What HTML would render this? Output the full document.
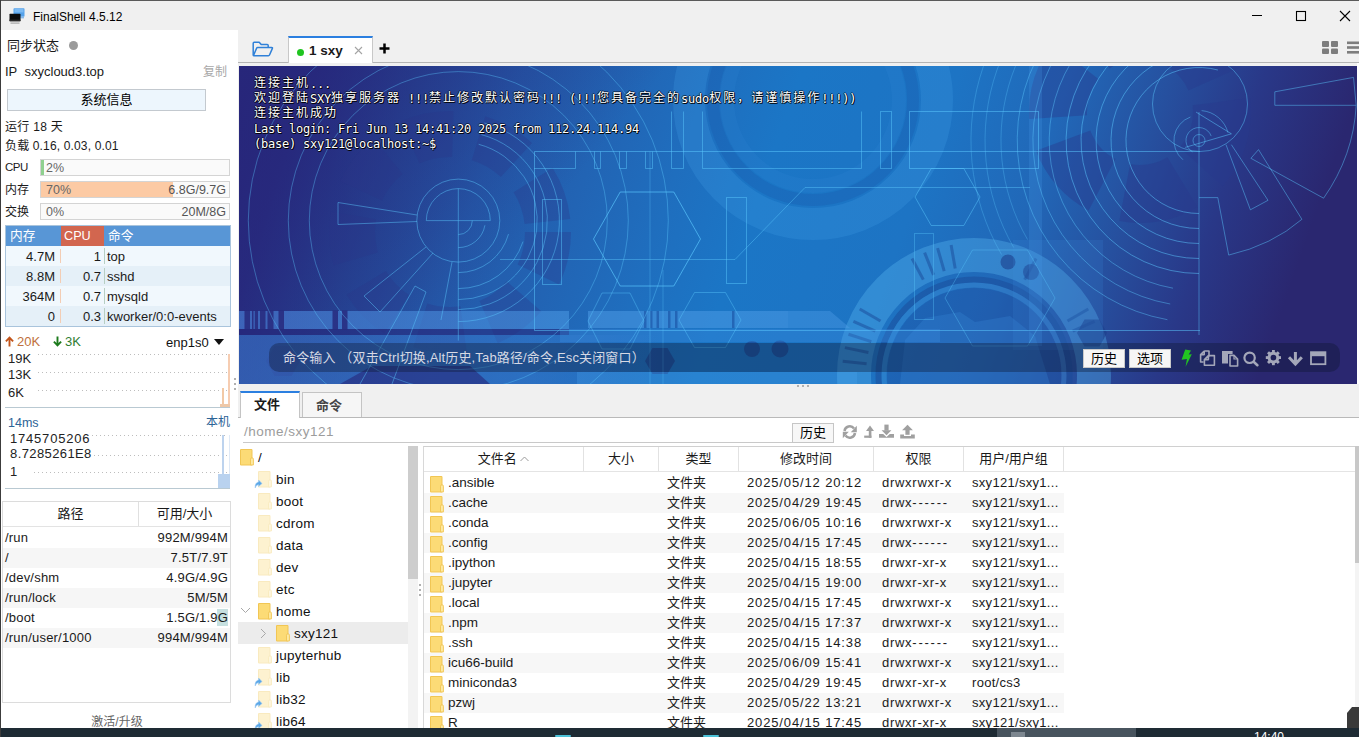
<!DOCTYPE html>
<html lang="zh-CN">
<head>
<meta charset="utf-8">
<title>FinalShell 4.5.12</title>
<style>
*{box-sizing:border-box;margin:0;padding:0}
html,body{width:1359px;height:737px;overflow:hidden;background:#f0f0f0}
body{position:relative;font-family:"Liberation Sans","Noto Sans CJK SC",sans-serif;font-size:13px;color:#1a1a1a;line-height:1}
.abs{position:absolute}
.t{position:absolute;white-space:nowrap;line-height:16px;height:16px}
/* ---------- title bar ---------- */
#titlebar{left:0;top:0;width:1359px;height:30px;background:#f0f0f0;border-top:1px solid #5a5a5a}
#wtitle{left:33px;top:9px;font-size:12px;color:#000}
/* ---------- left panel ---------- */
#left{left:1px;top:30px;width:237px;height:698px;background:#fff}
#winborder{left:0;top:0;width:1px;height:737px;background:#3c3c3c}
.bar{position:absolute;left:40px;width:190px;height:17px;border:1px solid #d4d4d4;background:#fafafa}
.bar i{position:absolute;left:0;top:0;bottom:0;display:block}
.bar .p{position:absolute;left:5px;top:0;line-height:17px;color:#666;font-size:12.5px}
.bar .v{position:absolute;right:3px;top:0;line-height:17px;color:#555;font-size:12.5px}
/* ---------- main ---------- */
#tabbar{left:238px;top:30px;width:1121px;height:33px;background:#f0f0f0;border-bottom:1px solid #b4b4b4}
#term{left:239px;top:66px;width:1118px;height:318px;overflow:hidden;background:#1d5fae}
#lower{left:238px;top:384px;width:1121px;height:344px;background:#f0f0f0}
#taskbar{left:0;top:728px;width:1359px;height:9px;background:#1e2b34;overflow:hidden}

#proc{left:5px;top:225px;width:226px;height:102px;border:1px solid #a9c4dc;background:#f1f8fd;font-size:13px}
#proc .ph{position:absolute;left:0;top:0;width:224px;height:20px;background:#5896d6;color:#fff;line-height:20px;font-size:12.7px}
#proc .ph span{top:0}
#proc .cpuh{left:55px;top:0;width:43px;height:20px;background:#d2664f;font-weight:normal}
#proc .pr{position:relative;height:20px;line-height:20px;width:224px}
#proc .pr:first-of-type{margin-top:0}
#proc .ph + .pr{margin-top:20px}
#proc .pr.a{background:#f1f8fd}
#proc .pr.b{background:#e5f0f8}
#proc .pr span{position:absolute;top:1px;white-space:nowrap}
#proc .pr .m{right:175px;text-align:right}
#proc .pr .c{right:129px;text-align:right}
#proc .pr .n{left:101px}
#proc .pr:before{content:"";position:absolute;left:54px;top:3px;width:1px;height:14px;background:#f3cdb4}
#proc .pr:after{content:"";position:absolute;left:98px;top:2px;width:1px;height:16px;background:#b7cfc4}

.dot{position:absolute;height:1px;background-image:linear-gradient(90deg,#bdbdbd 1px,transparent 1px);background-size:4px 1px}
#disk{left:2px;top:501px;width:229px;height:202px;border:1px solid #dcdcdc;background:#fff;font-size:13px}
#disk .dh{position:relative;height:25px;border-bottom:1px solid #e3e3e3;line-height:24px}
#disk .dh span{position:absolute;top:0;text-align:center}
#disk .dh i{position:absolute;left:135px;top:0;width:1px;height:24px;background:#e0e0e0}
#disk .dr{position:relative;height:20px;line-height:20px}
#disk .dh + .dr{margin-top:1px}
#disk .dr.g{background:#f6f6f6}
#disk .dr span{position:absolute;top:0;white-space:nowrap}
#disk .dr .l{left:2px}
#disk .dr .r{right:2px}
#disk .dr em{position:absolute;right:2px;top:1px;width:11px;height:17px;background:#c6e0e0}

#tt{position:absolute;left:15px;top:11px;color:#fff;font-family:"DejaVu Sans Mono","Liberation Mono","Noto Sans CJK SC",monospace;font-size:12px;letter-spacing:-0.224px;line-height:15px;white-space:pre;text-shadow:1px 1px 0 rgba(0,0,0,.85),-1px 0 0 rgba(0,0,0,.55),0 -1px 0 rgba(0,0,0,.55),1px 0 0 rgba(0,0,0,.55),0 1px 0 rgba(0,0,0,.55)}
#tt div{height:15px}
#tt .c{font-family:"Liberation Mono","Noto Sans CJK SC",monospace;font-size:12px;letter-spacing:2px;position:relative;top:-1px}
#cmd{position:absolute;left:30px;top:277px;width:1071px;height:29px;border-radius:10px;background:rgba(14,22,48,.36)}
#cmdt{position:absolute;left:44px;top:284px;line-height:16px;font-size:13px;letter-spacing:.15px;color:#d6d9e4;white-space:nowrap}
.tbtn{position:absolute;top:283px;height:19px;width:42px;background:#f6f6f6;border:1px solid #c9c9c9;color:#000;font-size:13px;line-height:17px;text-align:center}

/* ---------- lower panel ---------- */
#ltabline{left:238px;top:417px;width:1121px;height:1px;background:#b9b9b9}
#lwhite{left:238px;top:418px;width:1121px;height:310px;background:#fff}
.ltab{position:absolute;font-size:13px;font-weight:bold;text-align:center;line-height:24px}
#treesel{left:238px;top:622px;width:170px;height:22px;background:#ececec}
.tr{position:absolute;white-space:nowrap;font-size:13.5px;letter-spacing:.25px;padding-top:1px;line-height:22px;height:22px;color:#111}
.fi{position:absolute;width:14px;height:17px}
#flist{left:423px;top:446px;width:932px;height:282px;border-top:1px solid #d0d0d0;border-left:1px solid #d8d8d8;background:#fff;overflow:hidden}
#fhead{position:absolute;left:0;top:0;height:25px;width:931px;border-bottom:1px solid #e4e4e4;font-size:13px;line-height:24px}
#fhead span{position:absolute;top:0;text-align:center;height:24px;border-right:1px solid #e2e2e2}
.fr{position:absolute;left:0;width:640px;height:20px;line-height:20px;font-size:13px;white-space:nowrap}
.fr.g{background:#f7f7f7}
.fr span{position:absolute;top:0}
.fr .fi{top:3px;left:6px}

.fr .d{letter-spacing:.86px}
.fr .p{letter-spacing:.72px}
.fr .p i{font-style:normal;letter-spacing:1.75px}
.fr .u{letter-spacing:.3px}
.fr .n{font-size:13.5px}
#disk .dr span{letter-spacing:.2px}
</style>
</head>
<body>
<div id="titlebar" class="abs"></div>
<div id="wtitle" class="t">FinalShell 4.5.12</div>
<div id="left" class="abs"></div>

<!-- ===== left panel content ===== -->
<div class="t" style="left:7px;top:38px;font-size:13px">同步状态</div>
<div class="abs" style="left:69px;top:41px;width:9px;height:9px;border-radius:50%;background:#9b9b9b"></div>
<div class="t" style="left:5px;top:64px;font-size:13px">IP&nbsp;&nbsp;sxycloud3.top</div>
<div class="t" style="left:203px;top:64px;font-size:12px;color:#a8a8a8">复制</div>
<div class="abs" style="left:7px;top:89px;width:199px;height:22px;background:#edf6fd;border:1px solid #c3c9cf"></div>
<div class="t" style="left:7px;top:92px;width:199px;text-align:center;font-size:13px;color:#000">系统信息</div>
<div class="t" style="left:5px;top:119px;font-size:12px;letter-spacing:.3px">运行 18 天</div>
<div class="t" style="left:5px;top:138px;font-size:12px;letter-spacing:.15px">负载 0.16, 0.03, 0.01</div>
<div class="t" style="left:5px;top:159px;font-size:11.5px;letter-spacing:-0.5px">CPU</div>
<div class="bar" style="top:159px"><i style="width:3px;background:#8fd08f"></i><span class="p">2%</span></div>
<div class="t" style="left:5px;top:182px;font-size:12px">内存</div>
<div class="bar" style="top:181px"><i style="width:132px;background:#fccaa4"></i><span class="p">70%</span><span class="v">6.8G/9.7G</span></div>
<div class="t" style="left:5px;top:204px;font-size:12px">交换</div>
<div class="bar" style="top:203px"><span class="p">0%</span><span class="v">20M/8G</span></div>

<div id="proc" class="abs">
  <div class="ph"><span class="abs" style="left:4px">内存</span><b class="abs cpuh"><span style="margin-left:3px">CPU</span></b><span class="abs" style="left:102px">命令</span></div>
  <div class="pr a"><span class="m">4.7M</span><span class="c">1</span><span class="n">top</span></div>
  <div class="pr b"><span class="m">8.8M</span><span class="c">0.7</span><span class="n">sshd</span></div>
  <div class="pr a"><span class="m">364M</span><span class="c">0.7</span><span class="n">mysqld</span></div>
  <div class="pr b"><span class="m">0</span><span class="c">0.3</span><span class="n">kworker/0:0-events</span></div>
</div>

<!-- ===== network ===== -->
<svg class="abs" style="left:5px;top:336px" width="9" height="11" viewBox="0 0 9 11"><path d="M4.5 10.6 V2.2 M0.9 5.4 L4.5 1.6 L8.1 5.4" fill="none" stroke="#c2541a" stroke-width="1.9"/></svg>
<div class="t" style="left:17px;top:334px;font-size:13px;color:#c0703c">20K</div>
<svg class="abs" style="left:53px;top:336px" width="9" height="11" viewBox="0 0 9 11"><path d="M4.5 0.4 V8.8 M0.9 5.6 L4.5 9.4 L8.1 5.6" fill="none" stroke="#1c7a1c" stroke-width="1.9"/></svg>
<div class="t" style="left:65px;top:334px;font-size:13px;color:#2f7d32">3K</div>
<div class="t" style="left:166px;top:335px;font-size:13px;color:#111">enp1s0</div>
<div class="abs" style="left:214px;top:339px;width:0;height:0;border-left:5px solid transparent;border-right:5px solid transparent;border-top:6px solid #111"></div>
<div class="t" style="left:8px;top:351px;font-size:13px;color:#222">19K</div>
<div class="t" style="left:8px;top:367px;font-size:13px;color:#222">13K</div>
<div class="t" style="left:8px;top:385px;font-size:13px;color:#222">6K</div>
<div class="dot" style="left:38px;top:354px;width:190px"></div>
<div class="dot" style="left:38px;top:372px;width:190px"></div>
<div class="dot" style="left:38px;top:390px;width:190px"></div>
<div class="abs" style="left:5px;top:407px;width:225px;height:1px;background:#b9c9d2"></div>
<div class="abs" style="left:228px;top:354px;width:2px;height:53px;background:#f6cdb2"></div>
<div class="abs" style="left:222px;top:388px;width:2px;height:19px;background:#f2c9a6"></div>
<div class="abs" style="left:220px;top:404px;width:10px;height:3px;background:#eec8a8"></div>
<!-- ===== ping ===== -->
<div class="t" style="left:8px;top:415px;font-size:12.5px;color:#2d6396">14ms</div>
<div class="t" style="left:206px;top:414px;font-size:12px;color:#2d6396">本机</div>
<div class="t" style="left:10px;top:431px;font-size:13px;letter-spacing:0.8px;color:#222">1745705206</div>
<div class="t" style="left:10px;top:446px;font-size:13px;letter-spacing:0.4px;color:#222">8.7285261E8</div>
<div class="t" style="left:10px;top:464px;font-size:13px;color:#222">1</div>
<div class="dot" style="left:92px;top:435px;width:136px"></div>
<div class="dot" style="left:94px;top:455px;width:134px"></div>
<div class="dot" style="left:34px;top:472px;width:194px"></div>
<div class="abs" style="left:222px;top:435px;width:2px;height:40px;background:#bdd3ee"></div><div class="abs" style="left:229px;top:435px;width:1px;height:40px;background:#dfe9f6"></div>
<div class="abs" style="left:218px;top:474px;width:12px;height:14px;background:#b9d2ef"></div>
<div class="abs" style="left:5px;top:488px;width:225px;height:1px;background:#b9c9d2"></div>
<!-- ===== disk table ===== -->
<div id="disk" class="abs">
  <div class="dh"><span style="left:0;width:135px">路径</span><span style="left:136px;width:91px">可用/大小</span><i></i></div>
  <div class="dr"><span class="l">/run</span><span class="r">992M/994M</span></div>
  <div class="dr g"><span class="l">/</span><span class="r">7.5T/7.9T</span></div>
  <div class="dr"><span class="l">/dev/shm</span><span class="r">4.9G/4.9G</span></div>
  <div class="dr g"><span class="l">/run/lock</span><span class="r">5M/5M</span></div>
  <div class="dr"><em></em><span class="l">/boot</span><span class="r">1.5G/1.9G</span></div>
  <div class="dr g"><span class="l">/run/user/1000</span><span class="r">994M/994M</span></div>
</div>
<div class="t" style="left:57px;top:714px;width:120px;text-align:center;font-size:12px;color:#666">激活/升级</div>
<div id="tabbar" class="abs"></div>

<!-- ===== title bar icons ===== -->
<svg class="abs" style="left:8px;top:7px" width="18" height="18" viewBox="0 0 18 18">
  <rect x="5.5" y="1.2" width="11" height="8.6" rx="0.8" fill="#55a2ea"/>
  <rect x="6.5" y="2" width="9" height="3.4" fill="#8cc4f6" opacity="0.7"/>
  <rect x="12" y="9.8" width="4" height="1.6" fill="#8ab8e6"/>
  <rect x="1.5" y="6.8" width="11" height="7.4" rx="0.6" fill="#0c0c0c"/>
  <rect x="1.5" y="12.6" width="11" height="1.6" fill="#2a2a2a"/>
  <rect x="2.5" y="15.6" width="9" height="1" fill="#9a9a9a"/>
</svg>
<svg class="abs" style="left:1246px;top:4px" width="113" height="24" viewBox="0 0 113 24">
  <path d="M6 11.5 H16" stroke="#000" stroke-width="1" fill="none"/>
  <rect x="50.5" y="7.5" width="9" height="9" stroke="#000" stroke-width="1.1" fill="none"/>
  <path d="M94 7 L104 17 M104 7 L94 17" stroke="#000" stroke-width="1.1" fill="none"/>
</svg>
<svg class="abs" style="left:1322px;top:41px" width="37" height="14" viewBox="0 0 37 14">
  <rect x="0" y="0" width="7" height="6" rx="1" fill="#7d7d7d"/><rect x="9" y="0" width="7" height="6" rx="1" fill="#7d7d7d"/>
  <rect x="0" y="7.5" width="7" height="5.5" rx="1" fill="#7d7d7d"/><rect x="9" y="7.5" width="7" height="5.5" rx="1" fill="#7d7d7d"/>
  <rect x="25" y="0.5" width="12" height="2.6" fill="#7d7d7d"/><rect x="25" y="5.2" width="12" height="2.6" fill="#7d7d7d"/><rect x="25" y="10" width="12" height="2.6" fill="#7d7d7d"/>
</svg>
<!-- ===== session tabs ===== -->
<svg class="abs" style="left:251px;top:40px" width="24" height="18" viewBox="0 0 24 18">
  <path d="M2.2 15.2 V3.2 Q2.2 2.2 3.2 2.2 H8.2 L10.2 4.6 H16.2 Q17.2 4.6 17.2 5.6 V7.4" fill="none" stroke="#2f80d8" stroke-width="1.5" stroke-linejoin="round"/>
  <path d="M2.4 15.6 L5.6 8.2 Q5.9 7.5 6.7 7.5 H20.6 Q21.8 7.5 21.3 8.6 L18.5 15 Q18.2 15.7 17.4 15.7 H2.6 Z" fill="none" stroke="#2f80d8" stroke-width="1.5" stroke-linejoin="round"/>
</svg>
<div class="abs" style="left:288px;top:36px;width:85px;height:27px;background:#fff;border:1px solid #c8c8c8;border-bottom:none;border-top:2px solid #2b7fe0"></div>
<div class="abs" style="left:297px;top:49px;width:7px;height:7px;border-radius:50%;background:#1fc41f"></div>
<div class="t" style="left:309px;top:43px;font-size:13.5px;font-weight:bold;color:#1a1a1a">1 sxy</div>
<svg class="abs" style="left:354px;top:46px" width="9" height="9" viewBox="0 0 9 9"><path d="M1 1 L8 8 M8 1 L1 8" stroke="#a4a4a4" stroke-width="1.1"/></svg>
<svg class="abs" style="left:379px;top:43px" width="11" height="11" viewBox="0 0 11 11"><path d="M5.5 0.5 V10.5 M0.5 5.5 H10.5" stroke="#000" stroke-width="2.5"/></svg>
<div class="abs" style="left:1357px;top:63px;width:2px;height:322px;background:#fff"></div>
<div id="term" class="abs">
<!--BG--><svg class="abs" style="left:0;top:0" width="1118" height="318" viewBox="239 66 1118 318">
<defs>
<linearGradient id="bg" x1="0" y1="0" x2="1" y2="0.1">
<stop offset="0" stop-color="#27267a"/><stop offset="0.07" stop-color="#272c80"/><stop offset="0.16" stop-color="#254695"/><stop offset="0.25" stop-color="#2459a9"/><stop offset="0.34" stop-color="#2264b4"/><stop offset="0.42" stop-color="#1f6ebe"/><stop offset="0.5" stop-color="#1b76c6"/><stop offset="0.64" stop-color="#1d74c4"/><stop offset="0.74" stop-color="#2168b8"/><stop offset="0.83" stop-color="#26509f"/><stop offset="0.91" stop-color="#293888"/><stop offset="1" stop-color="#2a2770"/>
</linearGradient>
<linearGradient id="bandl" x1="0" y1="0" x2="1" y2="0"><stop offset="0" stop-color="#4a86dc" stop-opacity=".62"/><stop offset="1" stop-color="#4f9ee8" stop-opacity=".5"/></linearGradient>
<linearGradient id="bandb" x1="0" y1="0" x2="1" y2="0"><stop offset="0" stop-color="#3a78cc" stop-opacity=".6"/><stop offset="0.7" stop-color="#3a7fd4" stop-opacity=".4"/><stop offset="1" stop-color="#3a7fd4" stop-opacity="0"/></linearGradient>
<linearGradient id="tl" gradientUnits="userSpaceOnUse" x1="239" y1="66" x2="560" y2="330"><stop offset="0" stop-color="#27267a" stop-opacity=".7"/><stop offset="0.45" stop-color="#27267a" stop-opacity=".32"/><stop offset="0.8" stop-color="#27267a" stop-opacity="0"/></linearGradient>
</defs>
<rect x="239" y="66" width="1118" height="318" fill="url(#bg)"/>
<rect x="239" y="66" width="500" height="318" fill="url(#tl)"/>
<g fill="none">
<circle cx="450" cy="232" r="98" stroke="#2b3488" stroke-opacity="0.3" stroke-width="46" stroke-dasharray="44 26"/>
<circle cx="813" cy="100" r="124" stroke="#4aa8ee" stroke-opacity="0.2" stroke-width="32"/>
<circle cx="813" cy="100" r="100" stroke="#1a55a8" stroke-opacity="0.28" stroke-width="12"/>
<circle cx="813" cy="100" r="86" stroke="#3a90dc" stroke-opacity="0.14" stroke-width="14"/>
<circle cx="1140" cy="112" r="82" stroke="#283a8c" stroke-opacity="0.42" stroke-width="58" stroke-dasharray="60 24"/>
<circle cx="974" cy="375" r="120" stroke="#5ab6f2" stroke-opacity="0.36" stroke-width="34"/>
<circle cx="974" cy="375" r="95.5" stroke="#1a4a98" stroke-opacity="0.5" stroke-width="6"/>
<circle cx="974" cy="375" r="90" stroke="#4aa0e4" stroke-opacity="0.3" stroke-width="5"/>
<circle cx="974" cy="375" r="87" fill="#1d4a9a" fill-opacity="0.3" stroke="none"/>
<path d="M905 340 L925 318 L960 312 L975 322 L1010 316 L1035 336 L1050 384 H900 Z" fill="#3a8ede" fill-opacity="0.25" stroke="none"/>
</g>
<g stroke="#1c4f9c" stroke-opacity="0.55" stroke-width="3">
<path d="M923.3 279.6 L912.0 258.5"/>
<path d="M933.5 274.9 L924.6 252.6"/>
<path d="M944.2 271.2 L937.6 248.1"/>
<path d="M955.2 268.6 L951.1 245.0"/>
<path d="M1024.7 279.6 L1036.0 258.5"/>
<path d="M1067.5 321.0 L1088.3 309.0"/>
<path d="M1072.7 331.1 L1094.6 321.3"/>
<path d="M880.5 321.0 L859.7 309.0"/>
<path d="M875.3 331.1 L853.4 321.3"/>
<path d="M871.3 341.6 L848.5 334.2"/>
<path d="M868.4 352.5 L844.9 347.6"/>
<path d="M866.6 363.7 L842.7 361.2"/>
</g>
<g fill="#1d3f8c" fill-opacity="0.6">
<polygon points="645.0,361.0 652.5,348.0 667.5,348.0 675.0,361.0 667.5,374.0 652.5,374.0"/>
<circle cx="752" cy="349" r="8"/><circle cx="780" cy="349" r="8.5"/>
<circle cx="1008" cy="262" r="7.5"/><circle cx="1031" cy="272" r="8"/>
<polygon points="1077.0,333.0 1084.5,319.5 1099.5,319.5 1107.0,333.0 1099.5,346.5 1084.5,346.5"/>
<polygon points="266.0,361.0 274.5,346.0 291.5,346.0 300.0,361.0 291.5,376.0 274.5,376.0" fill="#27277a" fill-opacity=".7"/>
</g>
<rect x="1029" y="66" width="13" height="280" fill="#4a9ae6" fill-opacity="0.22"/>
<rect x="1013" y="240" width="90" height="110" fill="#3f8ee0" fill-opacity="0.16"/>
<rect x="239" y="311" width="330" height="18" fill="url(#bandl)"/>
<rect x="588" y="311" width="200" height="17" fill="#4f9ee8" fill-opacity="0.5"/>
<path d="M788 311 H830 L850 328 H788 Z" fill="#4f9ee8" fill-opacity="0.4"/>
<rect x="239" y="329" width="330" height="6" fill="#27277a" fill-opacity="0.55"/>
<rect x="239" y="335" width="420" height="49" fill="url(#bandb)"/>
<rect x="560" y="329" width="380" height="13" fill="#3f90e4" fill-opacity="0.28"/>
<path d="M340 384 L372 366 H470 L490 384 Z" fill="#27277a" fill-opacity="0.6"/>
<rect x="577" y="372" width="280" height="12" fill="#4aa4ee" fill-opacity="0.28"/>
<g fill="#27297c" fill-opacity="0.85">
<rect x="244.5" y="310.500" width="5.5" height="19"/>
<rect x="252" y="310.500" width="1.5" height="19"/>
<rect x="254.8" y="310.500" width="3.2" height="19"/>
<rect x="260" y="310.500" width="5.5" height="19"/>
<rect x="267.5" y="310.500" width="6" height="19"/>
<rect x="278.5" y="310.500" width="5.5" height="19"/>
<rect x="332.5" y="310.500" width="5.5" height="19"/>
<rect x="342" y="310.500" width="5.5" height="19"/>
</g>
<g fill="#1f5cae" fill-opacity="0.8">
<rect x="644" y="311" width="2.5" height="17"/>
<rect x="650" y="311" width="2.5" height="17"/>
<rect x="656.5" y="311" width="2.5" height="17"/>
<rect x="668" y="311" width="2.5" height="17"/>
<rect x="675" y="311" width="2.5" height="17"/>
<rect x="732" y="311" width="2.5" height="17"/>
</g>
<g fill="none" stroke="#5ccaff" stroke-opacity="0.46" stroke-width="1">
<circle cx="458.3" cy="220.6" r="41.5"/>
<path d="M426.3 220.6 A32 32 0 0 1 490.3 220.6 M426.3 220.6 H490.3 M458.3 188.6 V220.6"/>
<path d="M472.3 220.6 A14 14 0 0 1 458.3 234.6"/>
<path d="M484.9 225.3 A27 27 0 0 1 458.3 247.6"/>
<path d="M508.5 234.1 A52 52 0 0 1 458.3 272.6"/>
<path d="M523.0 241.6 A68 68 0 0 1 458.3 288.6"/>
<path d="M458.3 220.6 V340.6"/>
<path d="M478.7 144.3 A79 79 0 0 1 458.3 299.6" stroke-opacity="0.45"/>
<path d="M481.3 134.6 A89 89 0 0 1 458.3 309.6" stroke-opacity="0.45"/>
<path d="M484.4 123.0 A101 101 0 0 1 458.3 321.6" stroke-opacity="0.45"/>
<circle cx="458.3" cy="220.6" r="149" stroke-opacity="0.38"/>
<circle cx="458.3" cy="220.6" r="170" stroke-opacity="0.38"/>
<circle cx="458.3" cy="220.6" r="210" stroke-opacity="0.38"/>
<path d="M417 215 L338 202.500 V224.500 L417 221.500"/>
<path d="M426 247 L364 296 L380 312 L433 253"/>
<path d="M452 262 L441 320 M415 286 L426 292 L392 384 M415 286 L360 384"/>
<path d="M1200 151.500 H534.500 V330.500 H1200" stroke-opacity="0.5"/>
<rect x="542.500" y="199.500" width="19" height="85"/>
<rect x="726.500" y="197.500" width="20" height="86"/>
<path d="M534 168.500 H575.500 V151.500 M594.500 151.500 V168.500 H600.500 V151.500 M619.500 151.500 V168.500 H626.500 V151.500 M645.500 151.500 V168.500 H652.500 V151.500 M671.500 111.500 V168.500 H683.500 V111.500 M702.500 111.500 V168.500 H861.500 V111.500"/>
<path d="M500 259.500 H735 L805 187.500 H1030" stroke-opacity="0.42"/>
<polygon points="593.5,239.0 620.2,192.0 673.8,192.0 700.5,239.0 673.8,286.0 620.2,286.0" stroke-opacity="0.65"/>
<polygon points="915.0,197.0 931.2,168.5 963.8,168.5 980.0,197.0 963.8,225.5 931.2,225.5"/>
<polygon points="679.0,320.0 694.5,292.5 725.5,292.5 741.0,320.0 725.5,347.5 694.5,347.5" stroke-opacity="0.4"/>
<polygon points="588.0,321.0 602.0,293.0 630.0,293.0 644.0,321.0 630.0,349.0 602.0,349.0" stroke-opacity="0.4"/>
<polygon points="945.0,298.0 972.5,250.0 1027.5,250.0 1055.0,298.0 1027.5,346.0 972.5,346.0" stroke-opacity="0.35"/>
<rect x="880.500" y="111.500" width="11" height="57"/>
<rect x="909.500" y="111.500" width="129" height="57" stroke-opacity="0.5"/>
<rect x="914.500" y="233.500" width="19" height="86" stroke-opacity="0.35"/>
<path d="M650 151.500 V384 M663 270 V384" stroke-opacity="0.3"/>
<path d="M1199.0 213.5 A73 73 0 1 1 1217.9 70.0" stroke-opacity="0.5"/>
<path d="M1199.0 228.5 A88 88 0 1 1 1221.8 55.5" stroke-opacity="0.5"/>
<path d="M1199.0 243.5 A103 103 0 1 1 1225.7 41.0" stroke-opacity="0.5"/>
<path d="M1199.0 258.5 A118 118 0 1 1 1229.5 26.5" stroke-opacity="0.5"/>
<path d="M1199.0 273.5 A133 133 0 1 1 1233.4 12.0" stroke-opacity="0.5"/>
<path d="M1173.0 288.2 A150 150 0 0 1 1178.1 -8.0" stroke-opacity="0.42"/>
<path d="M1170.2 304.0 A166 166 0 0 1 1175.9 -23.9" stroke-opacity="0.42"/>
<path d="M1167.4 319.7 A182 182 0 0 1 1173.7 -39.7" stroke-opacity="0.42"/>
<path d="M1027.5 239.5 A198 198 0 0 1 1124.8 -43.1" stroke-opacity="0.3"/>
<path d="M1013.7 247.5 A214 214 0 0 1 1118.8 -57.9" stroke-opacity="0.3"/>
<path d="M1001.5 254.5 A228 228 0 0 1 1113.6 -70.9" stroke-opacity="0.3"/>
<circle cx="1200" cy="104" r="47.500"/>
<circle cx="1199" cy="140.5" r="6"/>
<path d="M1192.5 151.8 A13 13 0 1 1 1211.2 136.1"/>
<path d="M1182.9 159.7 A25 25 0 0 1 1190.4 117.0"/><path d="M1201.6 110.6 A30 30 0 0 1 1228.0 132.7"/>
<path d="M1199 112 V335" stroke-opacity="0.45"/>
<path d="M1274.8 91.8 L1353.5 77.4 L1356.2 105.3 L1274.8 105.3 Z"/>
<path d="M1226.0 144.7 L1250.4 209.8 L1268.0 200.3 L1231.4 144.7"/>
<path d="M1258.5 149.6 L1250.9 158.3 L1323.6 198.2"/>
<path d="M1356.2 105.3 Q1353.5 155.6 1323.6 198.2"/>
<path d="M1258.5 149.6 L1301.9 219.3"/>
<path d="M1301.9 219.3 Q1272.1 245.1 1228.7 255.1 L1217.8 197.6 H1199"/>
<path d="M1196.1 112.1 L1231.4 133.8 L1185.2 147.4" stroke-opacity="0.5"/>
</g>
</svg>
<!--/BG-->
<div id="tt"><div><span class="c">连接主机</span>...</div><div><span class="c">欢迎登陆</span>SXY<span class="c">独享服务器</span> !!!<span class="c">禁止修改默认密码</span>!!! (!!!<span class="c">您具备完全的</span>sudo<span class="c">权限，请谨慎操作</span>!!!))</div><div><span class="c">连接主机成功</span></div><div>Last login: Fri Jun 13 14:41:20 2025 from 112.24.114.94</div><div>(base) sxy121@localhost:~$</div></div>
<div id="cmd"></div>
<div id="cmdt">命令输入 （双击Ctrl切换,Alt历史,Tab路径/命令,Esc关闭窗口）</div>
<div class="tbtn" style="left:844px">历史</div>
<div class="tbtn" style="left:890px">选项</div>
<svg class="abs" style="left:941px;top:282px" width="150" height="20" viewBox="0 0 150 20">
  <!-- lightning -->
  <path d="M5.2 1.6 L11 2.4 L8.7 6.6 L11.8 6.2 L5.6 18.8 L6.9 10.9 L1.6 11.8 Z" fill="#22c422"/>
  <g fill="none" stroke="#a4a7b9" stroke-width="1.6" stroke-linejoin="round">
    <!-- copy -->
    <path d="M24.2 3 H29 V8.6 M24.2 3 L20.6 6.6 V14 H23.6 M24.2 3 V6.6 H20.6"/>
    <path d="M28.4 7.6 H34.4 V17.2 H24.4 V11.6 Z M28.4 7.6 V11.6 H24.4"/>
  </g>
  <!-- paste -->
  <g>
    <path d="M42 3 H52.6 V6 H48 V15.6 H42 Z" fill="#a4a7b9"/>
    <path d="M50 7.4 H54 L57.6 11 V18 H50 Z" fill="none" stroke="#a4a7b9" stroke-width="1.6" stroke-linejoin="round"/>
    <path d="M54 7.4 V11 H57.6" fill="none" stroke="#a4a7b9" stroke-width="1.2"/>
  </g>
  <!-- search -->
  <circle cx="69.6" cy="9.8" r="5.2" fill="none" stroke="#a4a7b9" stroke-width="2.2"/>
  <path d="M73.6 13.8 L77.4 17.2" stroke="#a4a7b9" stroke-width="2.6" stroke-linecap="round"/>
  <!-- gear -->
  <g transform="translate(93.4,9.6) scale(0.95)">
    <circle r="4.6" fill="none" stroke="#a4a7b9" stroke-width="3.2"/>
    <g fill="#a4a7b9">
      <rect x="-1.5" y="-8" width="3" height="3.2"/><rect x="-1.5" y="4.8" width="3" height="3.2"/>
      <rect x="-8" y="-1.5" width="3.2" height="3"/><rect x="4.8" y="-1.5" width="3.2" height="3"/>
      <g transform="rotate(45)"><rect x="-1.5" y="-8" width="3" height="3.2"/><rect x="-1.5" y="4.8" width="3" height="3.2"/><rect x="-8" y="-1.5" width="3.2" height="3"/><rect x="4.8" y="-1.5" width="3.2" height="3"/></g>
    </g>
  </g>
  <!-- down arrow -->
  <path d="M115.4 4 V14.5 M109 9.2 L115.4 16 L121.8 9.2" fill="none" stroke="#a4a7b9" stroke-width="3" stroke-linejoin="miter"/>
  <!-- window -->
  <rect x="131" y="4.2" width="14.4" height="12" fill="none" stroke="#a4a7b9" stroke-width="1.8"/>
  <rect x="131" y="4.2" width="14.4" height="4" fill="#a4a7b9"/>
</svg>
</div>
<div id="lower" class="abs"></div>
<div id="ltabline" class="abs"></div><div id="lwhite" class="abs"></div>
<div class="abs" style="left:797px;top:385px;width:2px;height:2px;background:#b0b0b0;box-shadow:5px 0 0 #b0b0b0,10px 0 0 #b0b0b0"></div>
<div class="abs" style="left:234px;top:378px;width:2px;height:2px;background:#b0b0b0;box-shadow:0 5px 0 #b0b0b0,0 10px 0 #b0b0b0"></div>
<div class="ltab" style="left:240px;top:391px;width:60px;height:27px;background:#fff;border:1px solid #c4c4c4;border-bottom:none;border-top:2px solid #2b7fe0;color:#1a1a1a;padding-right:6px">文件</div>
<div class="ltab" style="left:302px;top:392px;width:60px;height:25px;background:#f6f6f6;border:1px solid #c4c4c4;border-bottom:none;color:#444;line-height:25px;padding-right:6px">命令</div>
<div class="t" style="left:244px;top:424px;font-size:13.5px;color:#9c9c9c;letter-spacing:0.5px">/home/sxy121</div>
<div class="abs" style="left:243px;top:442px;width:591px;height:1px;background:#c9c9c9"></div>
<div class="abs" style="left:792px;top:423px;width:42px;height:20px;background:#f7f7f7;border:1px solid #c6c6c6;font-size:13px;line-height:18px;text-align:center;color:#000">历史</div>
<svg class="abs" style="left:842px;top:424px" width="76" height="16" viewBox="0 0 76 16">
<g fill="none" stroke="#a0a0a0" stroke-width="2.5"><path d="M2.5 7 A5.3 5.3 0 0 1 12 4.4"/><path d="M13 9 A5.3 5.3 0 0 1 3.5 11.6"/></g>
<g fill="#a0a0a0"><path d="M14.8 1.8 V8.2 H8.8 Z"/><path d="M0.8 14.2 V7.8 H6.8 Z"/>
<path d="M28 1.4 L32 7 H24 Z"/><rect x="26.8" y="6.5" width="2.6" height="7.3"/><rect x="22.2" y="11.6" width="7.2" height="2.2"/>
<rect x="42.4" y="0.6" width="4.2" height="6"/><path d="M39.6 6.2 H49.4 L44.5 11.2 Z"/><path d="M37 10 H41.2 L44.5 13 L47.8 10 H52 V13.8 H37 Z"/>
<path d="M65.5 0.8 L70.9 6.2 H60.1 Z"/><rect x="63.4" y="6" width="4.2" height="4.8"/><path d="M58.2 10.4 H62 V12 H69 V10.4 H72.8 V14.6 H58.2 Z"/></g>
</svg>
<div id="treesel" class="abs"></div>
<svg class="fi" preserveAspectRatio="none" viewBox="0 0 14 16" style="left:240px;top:449px"><rect x="0.5" y="0.5" width="11.5" height="14.5" rx="0.6" fill="#fcdb76" stroke="#f1c654"/><path d="M10.5 15 V9.6 Q10.5 8.4 11.7 8.4 H12.4 Q13.4 8.4 13.4 9.6 V15 Z" fill="#fde9a2" stroke="#f1c654" stroke-width="0.9"/></svg>
<div class="tr" style="left:258px;top:446px">/</div>
<svg class="fi" preserveAspectRatio="none" viewBox="0 0 14 16" style="left:258px;top:471px"><rect x="0.5" y="0.5" width="11.5" height="14.5" rx="0.6" fill="#fdf2d0" stroke="#f9eabf"/><path d="M10.5 15 V9.6 Q10.5 8.4 11.7 8.4 H12.4 Q13.4 8.4 13.4 9.6 V15 Z" fill="#fef6de" stroke="#f9eabf" stroke-width="0.9"/></svg>
<svg class="fi" preserveAspectRatio="none" viewBox="0 0 14 16" style="left:254px;top:472px"><path d="M1.2 15 C0.8 11.5 2.6 9.6 4.6 9.4 V7.6 L8 10.8 L4.6 13.6 V12 C3.2 12 2 13 1.2 15 Z" fill="#5aa7e8" stroke="#9fcbf2" stroke-width="0.6"/></svg>
<div class="tr" style="left:276px;top:468px">bin</div>
<svg class="fi" preserveAspectRatio="none" viewBox="0 0 14 16" style="left:258px;top:493px"><rect x="0.5" y="0.5" width="11.5" height="14.5" rx="0.6" fill="#fdf2d0" stroke="#f9eabf"/><path d="M10.5 15 V9.6 Q10.5 8.4 11.7 8.4 H12.4 Q13.4 8.4 13.4 9.6 V15 Z" fill="#fef6de" stroke="#f9eabf" stroke-width="0.9"/></svg>
<div class="tr" style="left:276px;top:490px">boot</div>
<svg class="fi" preserveAspectRatio="none" viewBox="0 0 14 16" style="left:258px;top:515px"><rect x="0.5" y="0.5" width="11.5" height="14.5" rx="0.6" fill="#fdf2d0" stroke="#f9eabf"/><path d="M10.5 15 V9.6 Q10.5 8.4 11.7 8.4 H12.4 Q13.4 8.4 13.4 9.6 V15 Z" fill="#fef6de" stroke="#f9eabf" stroke-width="0.9"/></svg>
<div class="tr" style="left:276px;top:512px">cdrom</div>
<svg class="fi" preserveAspectRatio="none" viewBox="0 0 14 16" style="left:258px;top:537px"><rect x="0.5" y="0.5" width="11.5" height="14.5" rx="0.6" fill="#fdf2d0" stroke="#f9eabf"/><path d="M10.5 15 V9.6 Q10.5 8.4 11.7 8.4 H12.4 Q13.4 8.4 13.4 9.6 V15 Z" fill="#fef6de" stroke="#f9eabf" stroke-width="0.9"/></svg>
<div class="tr" style="left:276px;top:534px">data</div>
<svg class="fi" preserveAspectRatio="none" viewBox="0 0 14 16" style="left:258px;top:559px"><rect x="0.5" y="0.5" width="11.5" height="14.5" rx="0.6" fill="#fdf2d0" stroke="#f9eabf"/><path d="M10.5 15 V9.6 Q10.5 8.4 11.7 8.4 H12.4 Q13.4 8.4 13.4 9.6 V15 Z" fill="#fef6de" stroke="#f9eabf" stroke-width="0.9"/></svg>
<div class="tr" style="left:276px;top:556px">dev</div>
<svg class="fi" preserveAspectRatio="none" viewBox="0 0 14 16" style="left:258px;top:581px"><rect x="0.5" y="0.5" width="11.5" height="14.5" rx="0.6" fill="#fdf2d0" stroke="#f9eabf"/><path d="M10.5 15 V9.6 Q10.5 8.4 11.7 8.4 H12.4 Q13.4 8.4 13.4 9.6 V15 Z" fill="#fef6de" stroke="#f9eabf" stroke-width="0.9"/></svg>
<div class="tr" style="left:276px;top:578px">etc</div>
<svg class="fi" preserveAspectRatio="none" viewBox="0 0 14 16" style="left:258px;top:603px"><rect x="0.5" y="0.5" width="11.5" height="14.5" rx="0.6" fill="#fcdb76" stroke="#f1c654"/><path d="M10.5 15 V9.6 Q10.5 8.4 11.7 8.4 H12.4 Q13.4 8.4 13.4 9.6 V15 Z" fill="#fde9a2" stroke="#f1c654" stroke-width="0.9"/></svg>
<svg class="abs" style="left:240px;top:607px" width="11" height="7" viewBox="0 0 11 7"><path d="M1 1 L5.5 5.5 L10 1" fill="none" stroke="#a8a8a8" stroke-width="1"/></svg>
<div class="tr" style="left:276px;top:600px">home</div>
<svg class="fi" preserveAspectRatio="none" viewBox="0 0 14 16" style="left:276px;top:625px"><rect x="0.5" y="0.5" width="11.5" height="14.5" rx="0.6" fill="#fcdb76" stroke="#f1c654"/><path d="M10.5 15 V9.6 Q10.5 8.4 11.7 8.4 H12.4 Q13.4 8.4 13.4 9.6 V15 Z" fill="#fde9a2" stroke="#f1c654" stroke-width="0.9"/></svg>
<svg class="abs" style="left:260px;top:628px" width="7" height="11" viewBox="0 0 7 11"><path d="M1 1 L5.5 5.5 L1 10" fill="none" stroke="#a8a8a8" stroke-width="1"/></svg>
<div class="tr" style="left:294px;top:622px">sxy121</div>
<svg class="fi" preserveAspectRatio="none" viewBox="0 0 14 16" style="left:258px;top:647px"><rect x="0.5" y="0.5" width="11.5" height="14.5" rx="0.6" fill="#fdf2d0" stroke="#f9eabf"/><path d="M10.5 15 V9.6 Q10.5 8.4 11.7 8.4 H12.4 Q13.4 8.4 13.4 9.6 V15 Z" fill="#fef6de" stroke="#f9eabf" stroke-width="0.9"/></svg>
<div class="tr" style="left:276px;top:644px">jupyterhub</div>
<svg class="fi" preserveAspectRatio="none" viewBox="0 0 14 16" style="left:258px;top:669px"><rect x="0.5" y="0.5" width="11.5" height="14.5" rx="0.6" fill="#fdf2d0" stroke="#f9eabf"/><path d="M10.5 15 V9.6 Q10.5 8.4 11.7 8.4 H12.4 Q13.4 8.4 13.4 9.6 V15 Z" fill="#fef6de" stroke="#f9eabf" stroke-width="0.9"/></svg>
<svg class="fi" preserveAspectRatio="none" viewBox="0 0 14 16" style="left:254px;top:670px"><path d="M1.2 15 C0.8 11.5 2.6 9.6 4.6 9.4 V7.6 L8 10.8 L4.6 13.6 V12 C3.2 12 2 13 1.2 15 Z" fill="#5aa7e8" stroke="#9fcbf2" stroke-width="0.6"/></svg>
<div class="tr" style="left:276px;top:666px">lib</div>
<svg class="fi" preserveAspectRatio="none" viewBox="0 0 14 16" style="left:258px;top:691px"><rect x="0.5" y="0.5" width="11.5" height="14.5" rx="0.6" fill="#fdf2d0" stroke="#f9eabf"/><path d="M10.5 15 V9.6 Q10.5 8.4 11.7 8.4 H12.4 Q13.4 8.4 13.4 9.6 V15 Z" fill="#fef6de" stroke="#f9eabf" stroke-width="0.9"/></svg>
<svg class="fi" preserveAspectRatio="none" viewBox="0 0 14 16" style="left:254px;top:692px"><path d="M1.2 15 C0.8 11.5 2.6 9.6 4.6 9.4 V7.6 L8 10.8 L4.6 13.6 V12 C3.2 12 2 13 1.2 15 Z" fill="#5aa7e8" stroke="#9fcbf2" stroke-width="0.6"/></svg>
<div class="tr" style="left:276px;top:688px">lib32</div>
<svg class="fi" preserveAspectRatio="none" viewBox="0 0 14 16" style="left:258px;top:713px"><rect x="0.5" y="0.5" width="11.5" height="14.5" rx="0.6" fill="#fdf2d0" stroke="#f9eabf"/><path d="M10.5 15 V9.6 Q10.5 8.4 11.7 8.4 H12.4 Q13.4 8.4 13.4 9.6 V15 Z" fill="#fef6de" stroke="#f9eabf" stroke-width="0.9"/></svg>
<svg class="fi" preserveAspectRatio="none" viewBox="0 0 14 16" style="left:254px;top:714px"><path d="M1.2 15 C0.8 11.5 2.6 9.6 4.6 9.4 V7.6 L8 10.8 L4.6 13.6 V12 C3.2 12 2 13 1.2 15 Z" fill="#5aa7e8" stroke="#9fcbf2" stroke-width="0.6"/></svg>
<div class="tr" style="left:276px;top:710px">lib64</div>
<div class="abs" style="left:408px;top:446px;width:10px;height:282px;background:#f3f3f3"></div>
<div class="abs" style="left:408px;top:446px;width:10px;height:133px;background:#cdcdcd"></div>
<div class="abs" style="left:419px;top:584px;width:2px;height:2px;background:#b0b0b0;box-shadow:0 5px 0 #b0b0b0,0 10px 0 #b0b0b0"></div>
<div id="flist" class="abs">
<div id="fhead"><span style="left:0;width:160px">文件名 <svg width="9" height="6" viewBox="0 0 9 6" style="vertical-align:1px"><path d="M0.5 5 L4.5 1 L8.5 5" fill="none" stroke="#9a9a9a" stroke-width="1"/></svg></span><span style="left:160px;width:75px">大小</span><span style="left:235px;width:80px">类型</span><span style="left:315px;width:135px">修改时间</span><span style="left:450px;width:90px">权限</span><span style="left:540px;width:100px">用户/用户组</span></div>
<div class="fr" style="top:26px"><svg class="fi" preserveAspectRatio="none" viewBox="0 0 14 16" ><rect x="0.5" y="0.5" width="11.5" height="14.5" rx="0.6" fill="#fcdb76" stroke="#f1c654"/><path d="M10.5 15 V9.6 Q10.5 8.4 11.7 8.4 H12.4 Q13.4 8.4 13.4 9.6 V15 Z" fill="#fde9a2" stroke="#f1c654" stroke-width="0.9"/></svg><span class="n" style="left:24px">.ansible</span><span style="left:243px">文件夹</span><span class="d" style="left:323px">2025/05/12 20:12</span><span class="p" style="left:458px">drwxrwxr-x</span><span class="u" style="left:548px">sxy121/sxy1...</span></div>
<div class="fr g" style="top:46px"><svg class="fi" preserveAspectRatio="none" viewBox="0 0 14 16" ><rect x="0.5" y="0.5" width="11.5" height="14.5" rx="0.6" fill="#fcdb76" stroke="#f1c654"/><path d="M10.5 15 V9.6 Q10.5 8.4 11.7 8.4 H12.4 Q13.4 8.4 13.4 9.6 V15 Z" fill="#fde9a2" stroke="#f1c654" stroke-width="0.9"/></svg><span class="n" style="left:24px">.cache</span><span style="left:243px">文件夹</span><span class="d" style="left:323px">2025/04/29 19:45</span><span class="p" style="left:458px">drwx<i>------</i></span><span class="u" style="left:548px">sxy121/sxy1...</span></div>
<div class="fr" style="top:66px"><svg class="fi" preserveAspectRatio="none" viewBox="0 0 14 16" ><rect x="0.5" y="0.5" width="11.5" height="14.5" rx="0.6" fill="#fcdb76" stroke="#f1c654"/><path d="M10.5 15 V9.6 Q10.5 8.4 11.7 8.4 H12.4 Q13.4 8.4 13.4 9.6 V15 Z" fill="#fde9a2" stroke="#f1c654" stroke-width="0.9"/></svg><span class="n" style="left:24px">.conda</span><span style="left:243px">文件夹</span><span class="d" style="left:323px">2025/06/05 10:16</span><span class="p" style="left:458px">drwxrwxr-x</span><span class="u" style="left:548px">sxy121/sxy1...</span></div>
<div class="fr g" style="top:86px"><svg class="fi" preserveAspectRatio="none" viewBox="0 0 14 16" ><rect x="0.5" y="0.5" width="11.5" height="14.5" rx="0.6" fill="#fcdb76" stroke="#f1c654"/><path d="M10.5 15 V9.6 Q10.5 8.4 11.7 8.4 H12.4 Q13.4 8.4 13.4 9.6 V15 Z" fill="#fde9a2" stroke="#f1c654" stroke-width="0.9"/></svg><span class="n" style="left:24px">.config</span><span style="left:243px">文件夹</span><span class="d" style="left:323px">2025/04/15 17:45</span><span class="p" style="left:458px">drwx<i>------</i></span><span class="u" style="left:548px">sxy121/sxy1...</span></div>
<div class="fr" style="top:106px"><svg class="fi" preserveAspectRatio="none" viewBox="0 0 14 16" ><rect x="0.5" y="0.5" width="11.5" height="14.5" rx="0.6" fill="#fcdb76" stroke="#f1c654"/><path d="M10.5 15 V9.6 Q10.5 8.4 11.7 8.4 H12.4 Q13.4 8.4 13.4 9.6 V15 Z" fill="#fde9a2" stroke="#f1c654" stroke-width="0.9"/></svg><span class="n" style="left:24px">.ipython</span><span style="left:243px">文件夹</span><span class="d" style="left:323px">2025/04/15 18:55</span><span class="p" style="left:458px">drwxr-xr-x</span><span class="u" style="left:548px">sxy121/sxy1...</span></div>
<div class="fr g" style="top:126px"><svg class="fi" preserveAspectRatio="none" viewBox="0 0 14 16" ><rect x="0.5" y="0.5" width="11.5" height="14.5" rx="0.6" fill="#fcdb76" stroke="#f1c654"/><path d="M10.5 15 V9.6 Q10.5 8.4 11.7 8.4 H12.4 Q13.4 8.4 13.4 9.6 V15 Z" fill="#fde9a2" stroke="#f1c654" stroke-width="0.9"/></svg><span class="n" style="left:24px">.jupyter</span><span style="left:243px">文件夹</span><span class="d" style="left:323px">2025/04/15 19:00</span><span class="p" style="left:458px">drwxr-xr-x</span><span class="u" style="left:548px">sxy121/sxy1...</span></div>
<div class="fr" style="top:146px"><svg class="fi" preserveAspectRatio="none" viewBox="0 0 14 16" ><rect x="0.5" y="0.5" width="11.5" height="14.5" rx="0.6" fill="#fcdb76" stroke="#f1c654"/><path d="M10.5 15 V9.6 Q10.5 8.4 11.7 8.4 H12.4 Q13.4 8.4 13.4 9.6 V15 Z" fill="#fde9a2" stroke="#f1c654" stroke-width="0.9"/></svg><span class="n" style="left:24px">.local</span><span style="left:243px">文件夹</span><span class="d" style="left:323px">2025/04/15 17:45</span><span class="p" style="left:458px">drwxrwxr-x</span><span class="u" style="left:548px">sxy121/sxy1...</span></div>
<div class="fr g" style="top:166px"><svg class="fi" preserveAspectRatio="none" viewBox="0 0 14 16" ><rect x="0.5" y="0.5" width="11.5" height="14.5" rx="0.6" fill="#fcdb76" stroke="#f1c654"/><path d="M10.5 15 V9.6 Q10.5 8.4 11.7 8.4 H12.4 Q13.4 8.4 13.4 9.6 V15 Z" fill="#fde9a2" stroke="#f1c654" stroke-width="0.9"/></svg><span class="n" style="left:24px">.npm</span><span style="left:243px">文件夹</span><span class="d" style="left:323px">2025/04/15 17:37</span><span class="p" style="left:458px">drwxrwxr-x</span><span class="u" style="left:548px">sxy121/sxy1...</span></div>
<div class="fr" style="top:186px"><svg class="fi" preserveAspectRatio="none" viewBox="0 0 14 16" ><rect x="0.5" y="0.5" width="11.5" height="14.5" rx="0.6" fill="#fcdb76" stroke="#f1c654"/><path d="M10.5 15 V9.6 Q10.5 8.4 11.7 8.4 H12.4 Q13.4 8.4 13.4 9.6 V15 Z" fill="#fde9a2" stroke="#f1c654" stroke-width="0.9"/></svg><span class="n" style="left:24px">.ssh</span><span style="left:243px">文件夹</span><span class="d" style="left:323px">2025/04/15 14:38</span><span class="p" style="left:458px">drwx<i>------</i></span><span class="u" style="left:548px">sxy121/sxy1...</span></div>
<div class="fr g" style="top:206px"><svg class="fi" preserveAspectRatio="none" viewBox="0 0 14 16" ><rect x="0.5" y="0.5" width="11.5" height="14.5" rx="0.6" fill="#fcdb76" stroke="#f1c654"/><path d="M10.5 15 V9.6 Q10.5 8.4 11.7 8.4 H12.4 Q13.4 8.4 13.4 9.6 V15 Z" fill="#fde9a2" stroke="#f1c654" stroke-width="0.9"/></svg><span class="n" style="left:24px">icu66-build</span><span style="left:243px">文件夹</span><span class="d" style="left:323px">2025/06/09 15:41</span><span class="p" style="left:458px">drwxrwxr-x</span><span class="u" style="left:548px">sxy121/sxy1...</span></div>
<div class="fr" style="top:226px"><svg class="fi" preserveAspectRatio="none" viewBox="0 0 14 16" ><rect x="0.5" y="0.5" width="11.5" height="14.5" rx="0.6" fill="#fcdb76" stroke="#f1c654"/><path d="M10.5 15 V9.6 Q10.5 8.4 11.7 8.4 H12.4 Q13.4 8.4 13.4 9.6 V15 Z" fill="#fde9a2" stroke="#f1c654" stroke-width="0.9"/></svg><span class="n" style="left:24px">miniconda3</span><span style="left:243px">文件夹</span><span class="d" style="left:323px">2025/04/29 19:45</span><span class="p" style="left:458px">drwxr-xr-x</span><span class="u" style="left:548px">root/cs3</span></div>
<div class="fr g" style="top:246px"><svg class="fi" preserveAspectRatio="none" viewBox="0 0 14 16" ><rect x="0.5" y="0.5" width="11.5" height="14.5" rx="0.6" fill="#fcdb76" stroke="#f1c654"/><path d="M10.5 15 V9.6 Q10.5 8.4 11.7 8.4 H12.4 Q13.4 8.4 13.4 9.6 V15 Z" fill="#fde9a2" stroke="#f1c654" stroke-width="0.9"/></svg><span class="n" style="left:24px">pzwj</span><span style="left:243px">文件夹</span><span class="d" style="left:323px">2025/05/22 13:21</span><span class="p" style="left:458px">drwxrwxr-x</span><span class="u" style="left:548px">sxy121/sxy1...</span></div>
<div class="fr" style="top:266px"><svg class="fi" preserveAspectRatio="none" viewBox="0 0 14 16" ><rect x="0.5" y="0.5" width="11.5" height="14.5" rx="0.6" fill="#fcdb76" stroke="#f1c654"/><path d="M10.5 15 V9.6 Q10.5 8.4 11.7 8.4 H12.4 Q13.4 8.4 13.4 9.6 V15 Z" fill="#fde9a2" stroke="#f1c654" stroke-width="0.9"/></svg><span class="n" style="left:24px">R</span><span style="left:243px">文件夹</span><span class="d" style="left:323px">2025/04/15 17:45</span><span class="p" style="left:458px">drwxr-xr-x</span><span class="u" style="left:548px">sxy121/sxy1...</span></div>
</div>
<div class="abs" style="left:1355px;top:446px;width:4px;height:282px;background:#f4f4f4"></div>
<div class="abs" style="left:1355px;top:446px;width:4px;height:117px;background:#c8c8c8"></div>
<svg class="abs" style="left:1346px;top:706px" width="13" height="22" viewBox="0 0 13 22"><path d="M1 22 V7 L6 1 H13 V22 Z" fill="#3a3a3a"/></svg>
<div id="taskbar" class="abs">
<div class="abs" style="left:997px;top:0;width:139px;height:9px;background:#48545e"></div>
<div class="abs" style="left:1011px;top:4px;width:14px;height:5px;background:#7d8790"></div>
<div class="abs" style="left:555px;top:7px;width:16px;height:2px;background:#4cc2d8;border-radius:1px"></div>
<div class="abs" style="left:703px;top:7px;width:16px;height:2px;background:#4cc2d8;border-radius:1px"></div>
<div class="abs" style="left:1254px;top:3px;font-size:12px;line-height:12px;color:#fff;white-space:nowrap">14:40</div>
</div>
<div id="winborder" class="abs"></div>
</body>
</html>
